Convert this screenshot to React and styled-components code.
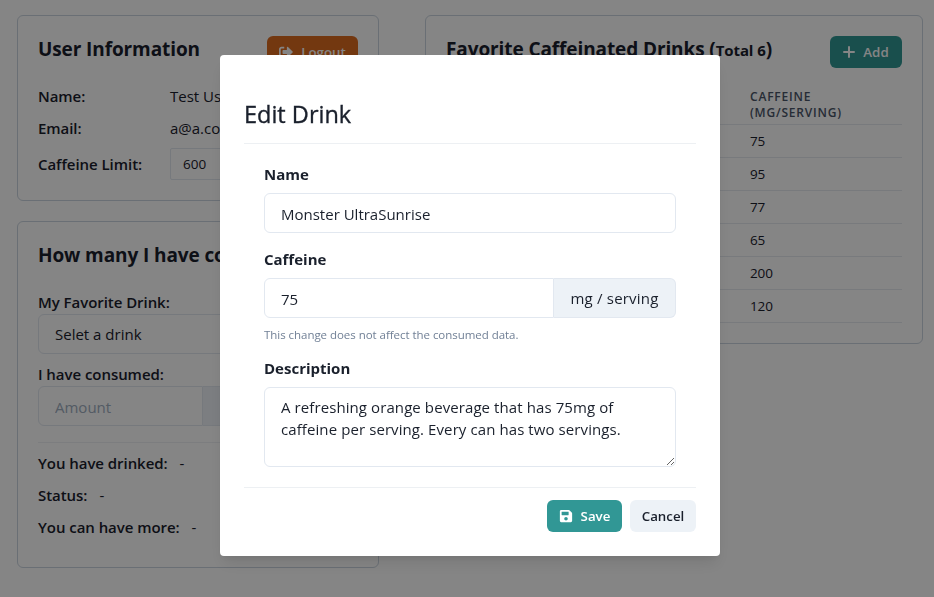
import React from "react";
import styled, { createGlobalStyle } from "styled-components";
import { FaSave, FaSignOutAlt } from "react-icons/fa";

const GlobalStyle = createGlobalStyle`
  *, *::before, *::after { box-sizing: border-box; }
  html, body { margin: 0; height: 100%; overflow: hidden; background: #fff; }
  body {
    font-family: "Open Sans", "Noto Sans", sans-serif;
    font-size: 15px;
    font-weight: 400;
    line-height: 24px;
    color: #1a202c;
  }
  input, textarea, button { font: inherit; letter-spacing: inherit; color: inherit; margin: 0; }
  h1, h2 { margin: 0; font: inherit; }
`;

const Page = styled.main`
  display: grid;
  grid-template-columns: 362px 498px;
  column-gap: 46px;
  align-items: start;
  padding: 15px 0 0 17px;
`;

const Column = styled.div`
  display: flex;
  flex-direction: column;
  gap: 20px;
`;

const Card = styled.section`
  border: 1px solid #cbd5e0;
  border-radius: 6px;
  padding: 20px;
  min-height: ${(p) => p.$height}px;
`;

const CardHeader = styled.header`
  display: flex;
  justify-content: space-between;
  align-items: flex-start;
  margin-bottom: 16px;
`;

const CardTitle = styled.h2`
  font-size: 19px;
  font-weight: 700;
  line-height: 26px;
  white-space: nowrap;
  letter-spacing: -0.1px;
  small { font-size: 15px; }
`;

const Button = styled.button`
  display: inline-flex;
  align-items: center;
  justify-content: center;
  gap: 8px;
  width: ${(p) => p.$width}px;
  height: 32px;
  padding: 0;
  border: 0;
  border-radius: 6px;
  font-size: 13.3px;
  font-weight: 600;
  line-height: 20px;
  color: ${(p) => (p.$tone === "plain" ? "#1a202c" : "#fff")};
  background: ${(p) => ({ teal: "#319795", orange: "#dd6b20", plain: "#edf2f7" })[p.$tone]};
`;

const InfoGrid = styled.div`
  display: grid;
  grid-template-columns: 132px 1fr;
  row-gap: 8px;
  align-items: center;
`;

const Label = styled.span`
  font-size: 15px;
  font-weight: ${(p) => (p.$bold ? 700 : 600)};
  letter-spacing: ${(p) => (p.$bold ? 0 : -0.05)}px;
  white-space: nowrap;
`;

const Value = styled.span``;

const LimitInput = styled.input`
  width: 100px;
  height: 32px;
  padding: 0 12px;
  border: 1px solid #e2e8f0;
  border-radius: 2px;
  background: transparent;
  font-size: 13.5px;
`;

const Control = styled.input`
  display: block;
  flex: 1;
  min-width: 0;
  width: 100%;
  height: 40px;
  padding: 2px 16px 0;
  border: 1px solid #e2e8f0;
  border-radius: ${(p) => (p.$joined ? "6px 0 0 6px" : "6px")};
  background: transparent;
  outline: 0;
  &::placeholder { color: #a0aec0; opacity: 1; }
`;

const InputGroup = styled.div`
  display: flex;
`;

const Addon = styled.span`
  display: flex;
  align-items: center;
  justify-content: center;
  width: ${(p) => p.$width}px;
  height: 40px;
  border: 1px solid #e2e8f0;
  border-left-width: ${(p) => (p.$flush ? 0 : 1)}px;
  border-radius: 0 6px 6px 0;
  background: #edf2f7;
  letter-spacing: 0.2px;
`;

const Divider = styled.hr`
  height: 1px;
  margin: ${(p) => p.$margin};
  border: 0;
  background: #edf0f3;
`;

const ConsumeForm = styled.div`
  display: flex;
  flex-direction: column;
  margin-top: 22px;
  > ${Label}:not(:first-child) { margin-top: 8px; }
  > ${Control} { flex: none; padding-top: 0; }
`;

const Stats = styled.div`
  display: flex;
  flex-direction: column;
  gap: 8px;
`;

const Stat = styled.div`
  display: flex;
  gap: 12px;
`;

const Table = styled.div`
  display: flex;
  flex-direction: column;
`;

const TableRow = styled.div`
  height: ${(p) => (p.$head ? 41 : 33)}px;
  padding: ${(p) => (p.$head ? "5px 0 3px 304px" : "6px 0 6px 304px")};
  border-bottom: 1px solid #e6eaef;
  font-size: ${(p) => (p.$head ? 12 : 13.5)}px;
  font-weight: ${(p) => (p.$head ? 600 : 400)};
  line-height: ${(p) => (p.$head ? 16 : 20)}px;
  letter-spacing: ${(p) => (p.$head ? 0.8 : -0.1)}px;
  color: ${(p) => (p.$head ? "#4a5568" : "#1a202c")};
`;

const Overlay = styled.div`
  position: fixed;
  inset: 0;
  display: flex;
  justify-content: center;
  align-items: flex-start;
  padding: 55px 0 0 6px;
  background: rgba(0, 0, 0, 0.48);
`;

const Dialog = styled.div`
  width: 500px;
  height: 501px;
  padding: 43px 24px 24px;
  border-radius: 4px;
  background: #fff;
  box-shadow: 0 10px 15px -3px rgba(0, 0, 0, 0.1), 0 4px 6px -2px rgba(0, 0, 0, 0.05);
`;

const DialogTitle = styled.h1`
  font-size: 23.5px;
  line-height: 32px;
  -webkit-text-stroke: 0.35px currentColor;
`;

const Fields = styled.div`
  display: flex;
  flex-direction: column;
  padding: 0 20px;
`;

const Field = styled.label`
  display: flex;
  flex-direction: column;
  margin-top: ${(p) => p.$top}px;
  > ${Label} { margin-bottom: 7px; }
  > ${Control} { flex: none; }
`;

const Hint = styled.span`
  margin-top: 8px;
  font-size: 11.5px;
  line-height: 18px;
  letter-spacing: -0.04px;
  color: #718096;
`;

const TextArea = styled.textarea`
  display: block;
  height: 80px;
  padding: 8px 16px;
  border: 1px solid #e2e8f0;
  border-radius: 6px;
  background: transparent;
  line-height: 22px;
  letter-spacing: 0.09px;
  resize: vertical;
  outline: 0;
`;

const Actions = styled.footer`
  display: flex;
  justify-content: flex-end;
  gap: 8px;
`;

const PlusIcon = () => (
  <svg width="12" height="12" viewBox="0 0 12 12" fill="none" stroke="currentColor" strokeWidth="2" strokeLinecap="round">
    <path d="M6 1v10M1 6h10" />
  </svg>
);

const amounts = [75, 95, 77, 65, 200, 120];
const stats = ["You have drinked:", "Status:", "You can have more:"];

export default function App() {
  return (
    <>
      <GlobalStyle />
      <Page>
        <Column>
          <Card $height={186}>
            <CardHeader>
              <CardTitle>User Information</CardTitle>
              <Button $tone="orange" $width={91}><FaSignOutAlt size={14} />Logout</Button>
            </CardHeader>
            <InfoGrid>
              <Label>Name:</Label>
              <Value>Test User</Value>
              <Label>Email:</Label>
              <Value>a@a.com</Value>
              <Label>Caffeine Limit:</Label>
              <LimitInput defaultValue="600" />
            </InfoGrid>
          </Card>
          <Card $height={347}>
            <CardTitle>How many I have consumed</CardTitle>
            <ConsumeForm>
              <Label>My Favorite Drink:</Label>
              <Control defaultValue="Selet a drink" />
              <Label>I have consumed:</Label>
              <InputGroup>
                <Control $joined placeholder="Amount" />
                <Addon $flush $width={155} />
              </InputGroup>
            </ConsumeForm>
            <Divider $margin="16px 0 8px" />
            <Stats>
              {stats.map((name) => (
                <Stat key={name}><Label>{name}</Label><Value>-</Value></Stat>
              ))}
            </Stats>
          </Card>
        </Column>
        <Card $height={329}>
          <CardHeader>
            <CardTitle>Favorite Caffeinated Drinks (<small>Total 6</small>)</CardTitle>
            <Button $tone="teal" $width={72}><PlusIcon />Add</Button>
          </CardHeader>
          <Table>
            <TableRow $head>CAFFEINE<br />(MG/SERVING)</TableRow>
            {amounts.map((n) => <TableRow key={n}>{n}</TableRow>)}
          </Table>
        </Card>
      </Page>
      <Overlay>
        <Dialog role="dialog">
          <DialogTitle>Edit Drink</DialogTitle>
          <Divider $margin="13px 0 18px" />
          <Fields>
            <Field $top={0}>
              <Label $bold>Name</Label>
              <Control defaultValue="Monster UltraSunrise" />
            </Field>
            <Field $top={14}>
              <Label $bold>Caffeine</Label>
              <InputGroup>
                <Control $joined defaultValue="75" />
                <Addon $flush $width={122}>mg / serving</Addon>
              </InputGroup>
              <Hint>This change does not affect the consumed data.</Hint>
            </Field>
            <Field $top={12}>
              <Label $bold>Description</Label>
              <TextArea defaultValue={"A refreshing orange beverage that has 75mg of caffeine per serving. Every can has two servings."} />
            </Field>
          </Fields>
          <Divider $margin="20px 0 12px" />
          <Actions>
            <Button $tone="teal" $width={75}><FaSave size={14} />Save</Button>
            <Button $tone="plain" $width={66}>Cancel</Button>
          </Actions>
        </Dialog>
      </Overlay>
    </>
  );
}
